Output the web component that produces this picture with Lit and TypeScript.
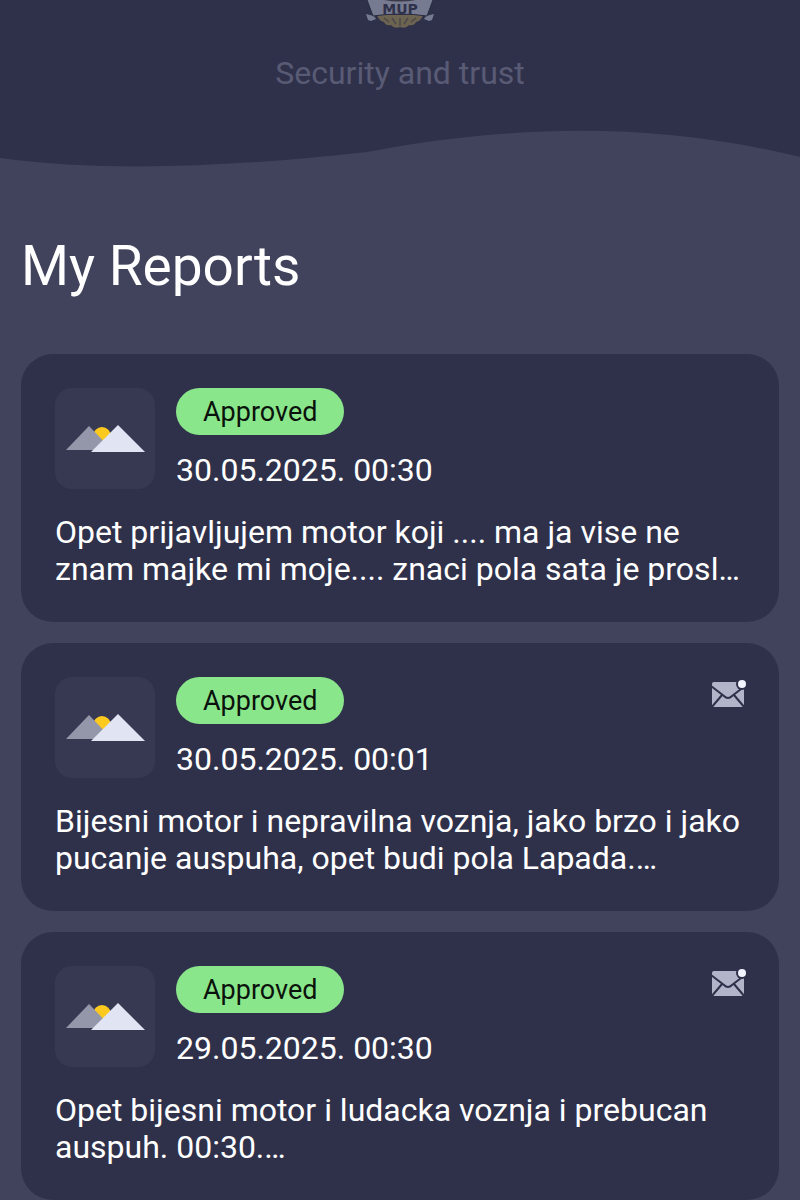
import { LitElement, html, css } from "lit";
import { customElement, property } from "lit/decorators.js";

interface Report {
  status: string;
  date: string;
  text: string;
  unread: boolean;
}

const reports: Report[] = [
  { status: "Approved", date: "30.05.2025. 00:30", text: "Opet prijavljujem motor koji .... ma ja vise ne znam majke mi moje.... znaci pola sata je prosl…", unread: false },
  { status: "Approved", date: "30.05.2025. 00:01", text: "Bijesni motor i nepravilna voznja, jako brzo i jako pucanje auspuha, opet budi pola Lapada.…", unread: true },
  { status: "Approved", date: "29.05.2025. 00:30", text: "Opet bijesni motor i ludacka voznja i prebucan auspuh. 00:30.…", unread: true },
];

@customElement("report-card")
class ReportCard extends LitElement {
  @property({ attribute: false }) report!: Report;

  static styles = css`
    :host { display: block; }
    .card { background: #2f314b; border-radius: 32px; padding: 34px; }
    .head { display: flex; gap: 21px; align-items: flex-start; }
    .thumb { width: 100px; height: 101px; border-radius: 17px; background: #373953; flex: none; }
    .thumb svg { display: block; width: 100%; height: 100%; }
    .meta { flex: 1; display: flex; flex-direction: column; align-items: flex-start; gap: 16px; }
    .badge { background: #8ae68a; color: #0a120c; border-radius: 24px; padding: 2px 27px 0; font-size: 27px; line-height: 45px; }
    .date { font-size: 32px; line-height: 38px; }
    .mail { width: 36px; height: 32px; flex: none; overflow: visible; }
    .text { margin: 25px 0 0; font-size: 32px; line-height: 37px; }
  `;

  render() {
    const r = this.report;
    return html`<article class="card">
      <div class="head">
        <div class="thumb">
          <svg viewBox="0 0 100 101" aria-hidden="true">
            <circle cx="47" cy="48" r="9" fill="#fcc91f" />
            <path d="M11 62 34 38 57 62Z" fill="#9496aa" />
            <path d="M36 64 63 37 90 64Z" fill="#e1e5f3" />
          </svg>
        </div>
        <div class="meta">
          <span class="badge">${r.status}</span>
          <time class="date">${r.date}</time>
        </div>
        ${r.unread
          ? html`<svg class="mail" viewBox="-1 0 36 32" role="img" aria-label="Unread message">
              <path d="M4 5H31Q34 5 34 8V28Q34 30 32 30H4Q2 30 2 28V7Q2 5 4 5Z" fill="#b2b4ca" />
              <path d="M1 9 14 19Q18 23 22 19L35 9M1 31 12 18M35 31 24 18" fill="none" stroke="#2f314b" stroke-width="2" />
              <circle cx="32" cy="7" r="6" fill="#2f314b" />
              <circle cx="32" cy="7" r="4" fill="#f2f4ff" />
            </svg>`
          : ""}
      </div>
      <p class="text">${r.text}</p>
    </article>`;
  }
}

@customElement("app-root")
class AppRoot extends LitElement {
  static styles = css`
    :host { display: block; min-height: 100vh; background: #41435d; color: #fff; font-family: Roboto, sans-serif; }
    .hero { display: flex; flex-direction: column; align-items: center; background: #2f314b; }
    .crest { display: block; width: 72px; height: 30px; }
    .crest text { font-family: "DejaVu Sans", sans-serif; font-weight: 700; font-size: 14px; }
    .tagline { margin: 24px 0 38px; font-size: 32px; line-height: 38px; color: #595b75; }
    .wave { display: block; width: 100%; height: 40px; }
    h1 { margin: 0; font-size: 55px; font-weight: 400; line-height: 66px; padding: 63px 21px 55px; }
    .list { display: grid; gap: 21px; padding: 0 21px; }
  `;

  render() {
    return html`<header class="hero">
        <svg class="crest" viewBox="0 0 72 30" role="img" aria-label="MUP">
          <path d="M13 15Q15 21 20 22Q22 26 27 25Q30 29 36 27Q42 29 45 25Q50 26 52 22Q57 21 59 15Z" fill="#6c6450" />
          <path d="M20 18 25 22M28 18 32 24M36 18V26M44 18 40 24M52 18 47 22" stroke="#4b4848" stroke-width="1.5" />
          <path d="M2 14 10 16 12 19 7 21 4 20ZM70 14 62 16 60 19 65 21 68 20Z" fill="#777b91" />
          <path d="M3 0 9 16Q36 12 63 16L69 0" fill="#777b91" stroke="#2a2b40" stroke-width="1" />
          <path d="M20 0Q36 3 52 0Z" fill="#3b3a48" />
          <text x="36" y="14" text-anchor="middle" fill="#2f314b">MUP</text>
        </svg>
        <p class="tagline">Security and trust</p>
        <svg class="wave" viewBox="0 0 800 40" preserveAspectRatio="none" aria-hidden="true">
          <path d="M0 28C110 43 240 36 367 22C520 -7 660 -7 800 27V40H0Z" fill="#41435d" />
        </svg>
      </header>
      <h1>My Reports</h1>
      <main class="list">${reports.map((r) => html`<report-card .report=${r}></report-card>`)}</main>`;
  }
}
